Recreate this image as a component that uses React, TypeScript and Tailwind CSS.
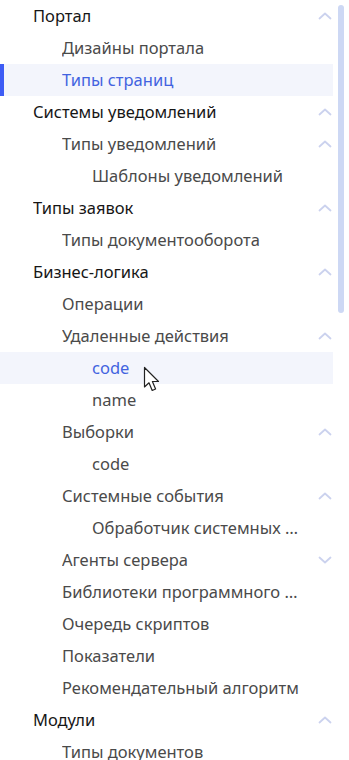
import React from 'react';

type Item = {
    label: string;
    level: 0 | 1 | 2;
    chevron?: 'up' | 'down';
    active?: boolean;
    hover?: boolean;
};

const items: Item[] = [
    { label: 'Портал', level: 0, chevron: 'up' },
    { label: 'Дизайны портала', level: 1 },
    { label: 'Типы страниц', level: 1, active: true },
    { label: 'Системы уведомлений', level: 0, chevron: 'up' },
    { label: 'Типы уведомлений', level: 1, chevron: 'up' },
    { label: 'Шаблоны уведомлений', level: 2 },
    { label: 'Типы заявок', level: 0, chevron: 'up' },
    { label: 'Типы документооборота', level: 1 },
    { label: 'Бизнес-логика', level: 0, chevron: 'up' },
    { label: 'Операции', level: 1 },
    { label: 'Удаленные действия', level: 1, chevron: 'up' },
    { label: 'code', level: 2, hover: true },
    { label: 'name', level: 2 },
    { label: 'Выборки', level: 1, chevron: 'up' },
    { label: 'code', level: 2 },
    { label: 'Системные события', level: 1, chevron: 'up' },
    { label: 'Обработчик системных событий', level: 2 },
    { label: 'Агенты сервера', level: 1, chevron: 'down' },
    { label: 'Библиотеки программного обеспечения', level: 1 },
    { label: 'Очередь скриптов', level: 1 },
    { label: 'Показатели', level: 1 },
    { label: 'Рекомендательный алгоритм', level: 1 },
    { label: 'Модули', level: 0, chevron: 'up' },
    { label: 'Типы документов', level: 1 },
];

const indent = ['pl-[33px]', 'pl-[62px]', 'pl-[92px]'];

const Chevron = ({ dir }: { dir: 'up' | 'down' }) => (
    <svg width="16" height="16" viewBox="0 0 16 16" className="shrink-0">
        <path
            d={dir === 'up' ? 'M2.5 10.5 L8 5.5 L13.5 10.5' : 'M2.5 5.5 L8 10.5 L13.5 5.5'}
            fill="none"
            stroke="#cbd2ee"
            strokeWidth="1.8"
            strokeLinecap="round"
            strokeLinejoin="round"
        />
    </svg>
);

const Cursor = () => (
    <svg width="20" height="30" viewBox="0 0 20 30" className="absolute left-[143px] top-[366px] pointer-events-none">
        <path
            d="M1.5 1.5 L1.5 21 L6 16.8 L9.2 24.5 L12.6 23 L9.4 15.5 L15.5 15.5 Z"
            fill="#ffffff"
            stroke="#222222"
            strokeWidth="1.2"
            strokeLinejoin="round"
        />
    </svg>
);

const App = () => {
    return (
        <div className="relative w-[349px] h-[760px] overflow-hidden bg-white" style={{ fontFamily: '"Noto Sans", sans-serif' }}>
            <div className="flex">
                <div className="w-[333px] shrink-0 flex flex-col">
                    {items.map((item, i) => (
                        <div
                            key={i}
                            className={`relative h-8 shrink-0 flex items-center ${indent[item.level]} ${item.active || item.hover ? 'bg-[#f3f5fc]' : ''}`}
                        >
                            {item.active && <div className="absolute left-0 top-0 bottom-0 w-1 bg-[#3d5cf5]" />}
                            <span
                                className={`flex-1 min-w-0 truncate text-[16.5px] leading-normal ${item.active || item.hover ? 'text-[#4263e0]' : item.level === 0 ? 'text-[#161616]' : 'text-[#4a4a4a]'}`}
                            >
                                {item.label}
                            </span>
                            <span className="w-[28px] shrink-0 flex justify-end">
                                {item.chevron && <Chevron dir={item.chevron} />}
                            </span>
                        </div>
                    ))}
                </div>
                <div className="ml-[5px] mt-[5px] w-[6px] h-[308px] rounded-full bg-[#cdd8f4]" />
            </div>
            <Cursor />
        </div>
    );
};

export default App;
